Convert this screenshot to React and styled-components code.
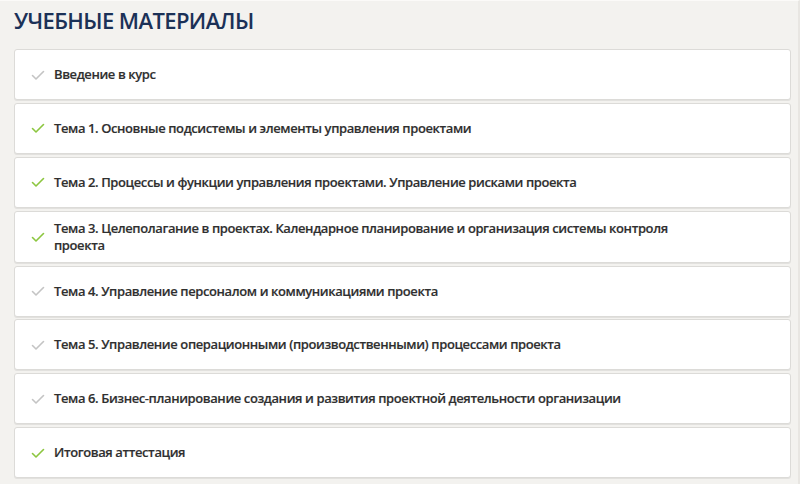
import React from "react";
import styled, { createGlobalStyle } from "styled-components";

const Global = createGlobalStyle`
  html, body { margin: 0; padding: 0; background: #f3f2ef; }
  body { font-family: "Open Sans", "Noto Sans", sans-serif; }
  * { box-sizing: border-box; }
`;

const Page = styled.div`
  width: 800px;
  height: 484px;
  background: #f3f2ef;
  border-top: 1px solid #fbfaf8;
  border-right: 2px solid #e8e6e2;
  padding: 4px 8px 0 14px;
  overflow: hidden;
`;

const Title = styled.h1`
  margin: 0 0 14px 0;
  font-size: 22px;
  line-height: 30px;
  font-weight: 600;
  color: #1b3157;
  letter-spacing: -0.6px;
`;

const List = styled.ul`
  list-style: none;
  margin: 0;
  padding: 0;
  display: flex;
  flex-direction: column;
  gap: 2.9px;
  width: 777px;
`;

const Item = styled.li`
  display: flex;
  align-items: center;
  gap: 9px;
  min-height: 51px;
  padding: 8px 16px 8px 16px;
  background: #fff;
  border: 1px solid #dcdbd8;
  border-radius: 3px;
  box-shadow: 0 1px 0 #e2e1de;
`;

const Check = styled.svg`
  flex: 0 0 14px;
  width: 14px;
  height: 14px;
`;

const Label = styled.span`
  font-size: 13px;
  line-height: 17px;
  font-weight: 600;
  color: #2f2f2f;
  letter-spacing: -0.4px;
  max-width: 620px;
  -webkit-text-stroke: 0.15px #2f2f2f;
`;

const items = [
  { t: "Введение в курс", done: false },
  { t: "Тема 1. Основные подсистемы и элементы управления проектами", done: true },
  { t: "Тема 2. Процессы и функции управления проектами. Управление рисками проекта", done: true },
  { t: "Тема 3. Целеполагание в проектах. Календарное планирование и организация системы контроля проекта", done: true },
  { t: "Тема 4. Управление персоналом и коммуникациями проекта", done: false },
  { t: "Тема 5. Управление операционными (производственными) процессами проекта", done: false },
  { t: "Тема 6. Бизнес-планирование создания и развития проектной деятельности организации", done: false },
  { t: "Итоговая аттестация", done: true },
];

function CheckIcon({ done }) {
  return (
    <Check viewBox="0 0 14 14" aria-hidden="true">
      <path
        d="M1.5 7.5 L5 11 L12.5 3.5"
        fill="none"
        stroke={done ? "#8cc63f" : "#c4c4c4"}
        strokeWidth="1.6"
        strokeLinecap="round"
        strokeLinejoin="round"
      />
    </Check>
  );
}

export default function App() {
  return (
    <>
      <Global />
      <Page>
        <Title>УЧЕБНЫЕ МАТЕРИАЛЫ</Title>
        <List>
          {items.map((it) => (
            <Item key={it.t}>
              <CheckIcon done={it.done} />
              <Label>{it.t}</Label>
            </Item>
          ))}
        </List>
      </Page>
    </>
  );
}
